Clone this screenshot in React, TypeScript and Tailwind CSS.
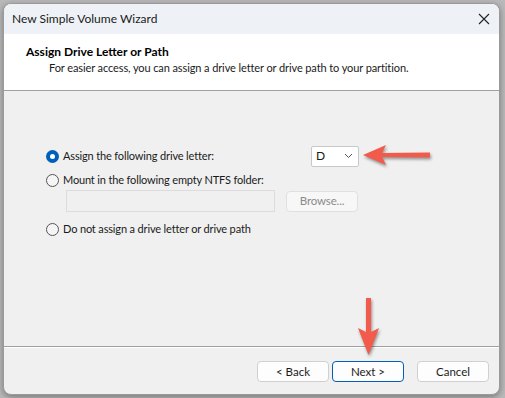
import React from "react";

function Radio({ checked }: { checked?: boolean }) {
  return checked ? (
    <span className="w-[13px] h-[13px] rounded-full bg-[#005fb8] flex items-center justify-center shrink-0">
      <span className="w-[5px] h-[5px] rounded-full bg-white" />
    </span>
  ) : (
    <span className="w-[13px] h-[13px] rounded-full border border-[#555] bg-[#f5f5f5] shrink-0" />
  );
}

function Btn({ label, primary }: { label: string; primary?: boolean }) {
  return (
    <div
      className={`w-[72px] h-[21px] rounded-[4px] bg-[#fdfdfd] flex items-center justify-center text-[11.5px] text-[#1b1b1b] border ${
        primary ? "border-[#005fb8]" : "border-[#d0d0d0]"
      }`}
    >
      {label}
    </div>
  );
}

export default function App() {
  return (
    <div
      className="relative w-[505px] h-[398px] bg-[#b9b9b9] overflow-hidden"
      style={{ fontFamily: "Lato, 'Noto Sans', sans-serif" }}
    >
      <div className="absolute left-[3px] top-[3px] w-[497px] h-[392px] rounded-[8px] bg-[#f0f0f0] border border-[#9a9a9a] shadow-[0_2px_6px_rgba(0,0,0,0.35)] flex flex-col overflow-hidden">
        {/* title bar */}
        <div className="h-[30px] bg-[#eef2f6] flex items-center justify-between pl-[8px] pr-[9px] shrink-0">
          <span className="text-[12px] text-[#1a1a1a]">New Simple Volume Wizard</span>
          <svg width="12" height="12" viewBox="0 0 12 12">
            <path d="M1 1L11 11M11 1L1 11" stroke="#222" strokeWidth="1.1" />
          </svg>
        </div>

        {/* header */}
        <div className="h-[57px] bg-white border-b border-[#a0a0a0] pl-[22px] pt-[10px] shrink-0">
          <div className="text-[12px] font-bold text-[#000] leading-[16px]">Assign Drive Letter or Path</div>
          <div className="text-[11px] tracking-[-0.1px] text-[#1a1a1a] pl-[23px] leading-[15px]">
            For easier access, you can assign a drive letter or drive path to your partition.
          </div>
        </div>

        {/* body */}
        <div className="flex-1 pl-[42px] pt-[55px] text-[11px] tracking-[-0.15px] text-[#1a1a1a]">
          <div className="flex items-center h-[20px]">
            <Radio checked />
            <span className="ml-[4px] w-[248px]">Assign the following drive letter:</span>
            <div className="w-[48px] h-[21px] bg-white border border-[#c8c8c8] rounded-[2px] flex items-center justify-between pl-[4px] pr-[5px]">
              <span className="text-[12px]">D</span>
              <svg width="9" height="6" viewBox="0 0 9 6">
                <path d="M1 1L4.5 4.5L8 1" fill="none" stroke="#555" strokeWidth="1" />
              </svg>
            </div>
          </div>
          <div className="flex items-center h-[20px] mt-[4px]">
            <Radio />
            <span className="ml-[4px]">Mount in the following empty NTFS folder:</span>
          </div>
          <div className="flex items-center ml-[20px]">
            <div className="w-[209px] h-[22px] border border-[#dcdcdc] bg-[#f0f0f0]" />
            <div className="ml-[11px] w-[72px] h-[21px] rounded-[4px] border border-[#e0e0e0] bg-[#f7f7f7] flex items-center justify-center text-[11.5px] text-[#8a8a8a]">
              Browse...
            </div>
          </div>
          <div className="flex items-center h-[20px] mt-[7px]">
            <Radio />
            <span className="ml-[4px]">Do not assign a drive letter or drive path</span>
          </div>
        </div>

        {/* footer */}
        <div className="h-[48px] border-t border-[#a0a0a0] shadow-[inset_0_1px_0_#fff] flex items-start pt-[14px] pl-[253px] shrink-0">
          <Btn label="< Back" />
          <div className="ml-[3px]">
            <Btn label="Next >" primary />
          </div>
          <div className="ml-[13px]">
            <Btn label="Cancel" />
          </div>
        </div>
      </div>

      {/* red arrows */}
      <svg className="absolute left-[360px] top-[140px]" width="80" height="32" viewBox="0 0 80 32">
        <g style={{ filter: "drop-shadow(1px 2px 1.5px rgba(0,0,0,0.4))" }}>
          <path d="M3 15L26 5L22 13L70 12.5L70 17.5L22 17L26 25Z" fill="#f25a4b" />
        </g>
      </svg>
      <svg className="absolute left-[354px] top-[294px]" width="32" height="66" viewBox="0 0 32 66">
        <g style={{ filter: "drop-shadow(1px 2px 1.5px rgba(0,0,0,0.4))" }}>
          <path d="M12 4L17 4L17 38L25 34L14.5 61L4 34L12 38Z" fill="#f25a4b" />
        </g>
      </svg>
    </div>
  );
}
